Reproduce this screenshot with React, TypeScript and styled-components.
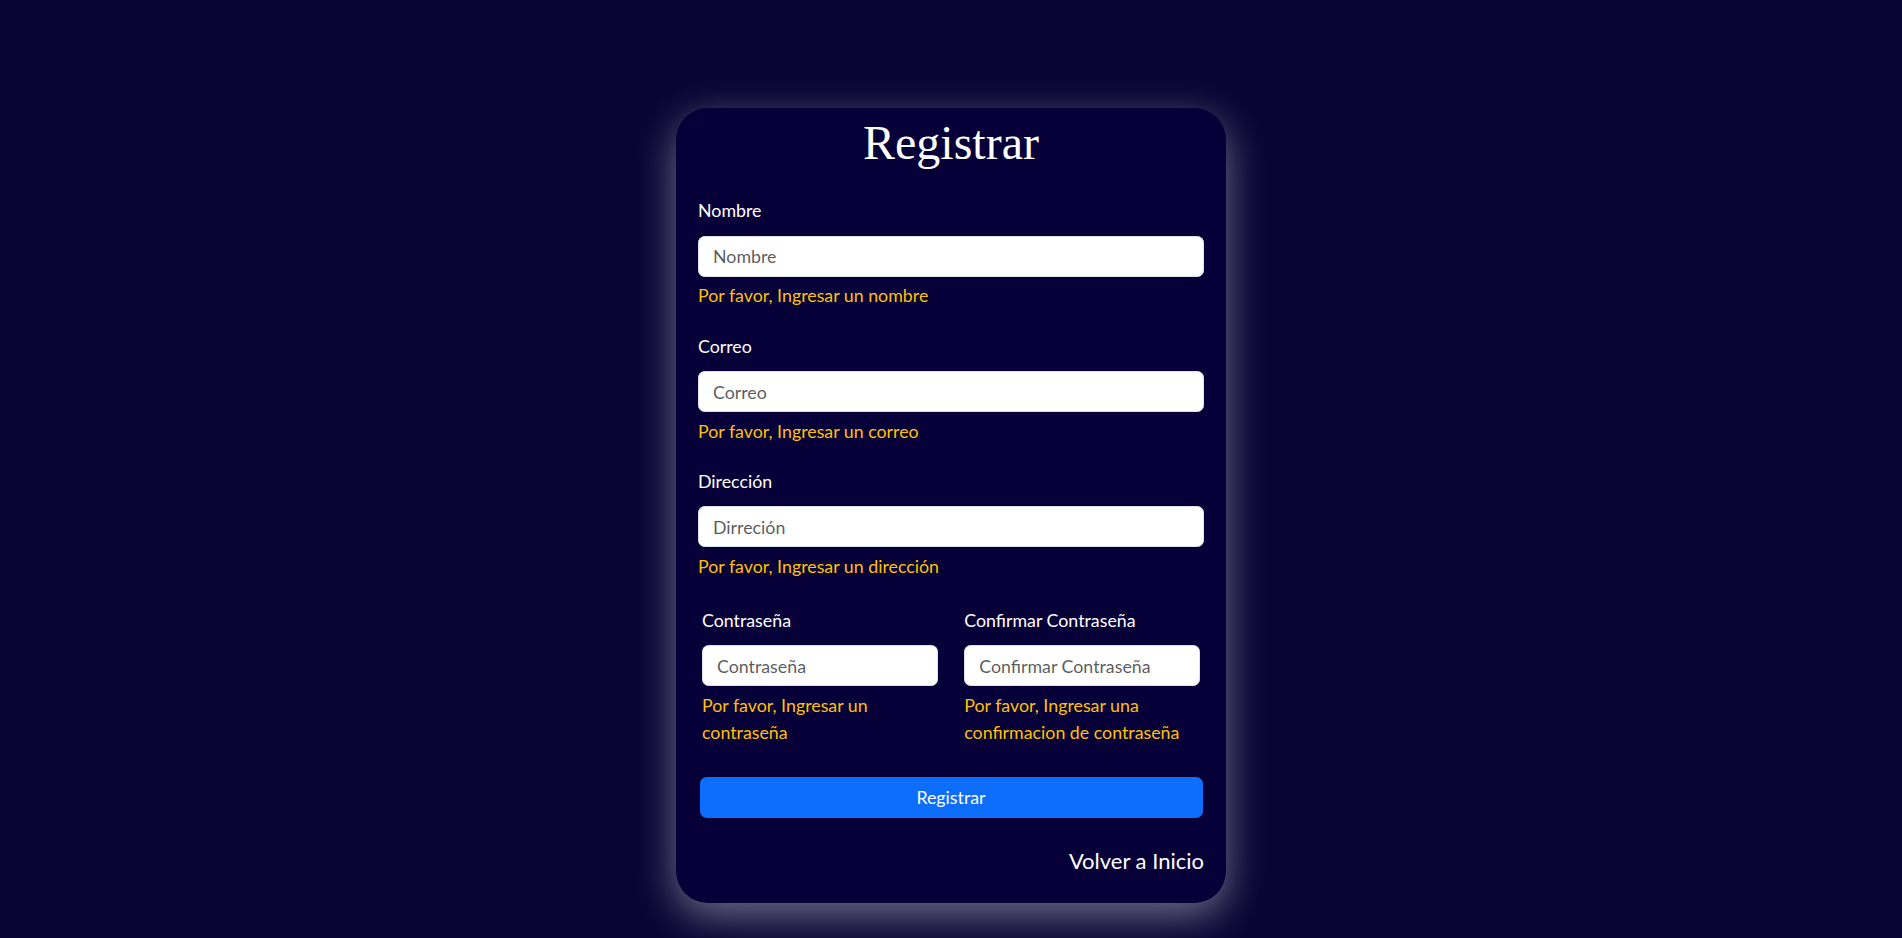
import React from 'react'
import styled, { createGlobalStyle } from 'styled-components'

interface Field {
  id: string
  label: string
  placeholder: string
  error: string
  type?: string
}

const mainFields: Field[] = [
  { id: 'nombre', label: 'Nombre', placeholder: 'Nombre', error: 'Por favor, Ingresar un nombre' },
  { id: 'correo', label: 'Correo', placeholder: 'Correo', error: 'Por favor, Ingresar un correo', type: 'email' },
  { id: 'direccion', label: 'Dirección', placeholder: 'Dirreción', error: 'Por favor, Ingresar un dirección' },
]

const passwordFields: Field[] = [
  { id: 'password', label: 'Contraseña', placeholder: 'Contraseña', error: 'Por favor, Ingresar un contraseña', type: 'password' },
  {
    id: 'confirm',
    label: 'Confirmar Contraseña',
    placeholder: 'Confirmar Contraseña',
    error: 'Por favor, Ingresar una confirmacion de contraseña',
    type: 'password',
  },
]

const GlobalStyle = createGlobalStyle`
  * {
    box-sizing: border-box;
  }
  body {
    margin: 0;
    background: #0a0433;
    font-family: Lato, "Segoe UI", Roboto, sans-serif;
    font-size: 17.8px;
    line-height: 26.4px;
    color: #fff;
  }
`

const FormField = ({ field }: { field: Field }) => (
  <Group>
    <Label htmlFor={field.id}>{field.label}</Label>
    <Input id={field.id} type={field.type ?? 'text'} placeholder={field.placeholder} />
    <Feedback>{field.error}</Feedback>
  </Group>
)

const App = () => {
  return (
    <>
      <GlobalStyle />
      <Page>
        <Card>
          <Title>Registrar</Title>
          <form onSubmit={(e) => e.preventDefault()}>
            {mainFields.map((field) => (
              <FormField key={field.id} field={field} />
            ))}
            <PasswordRow>
              {passwordFields.map((field) => (
                <FormField key={field.id} field={field} />
              ))}
            </PasswordRow>
            <SubmitBtn type='submit'>Registrar</SubmitBtn>
          </form>
          <Footer>
            <BackLink href='#'>Volver a Inicio</BackLink>
          </Footer>
        </Card>
      </Page>
    </>
  )
}

export default App

const Page = styled.div`
  display: flex;
  justify-content: center;
  min-height: 100vh;
  padding-top: 108px;
`

const Card = styled.div`
  width: 550px;
  height: 795px;
  padding: 6px 22px 26px;
  background: #070038;
  border-radius: 32px;
  box-shadow: 0 12px 40px rgba(255, 255, 255, 0.42);
`

const Title = styled.h1`
  margin: 0 0 25.7px;
  font-family: "Liberation Serif", "Times New Roman", serif;
  font-size: 48px;
  font-weight: 400;
  line-height: 1.2;
  text-align: center;
  color: #fff;
`

// 입력 그룹
const Group = styled.div`
  margin-bottom: 24px;
`
const Label = styled.label`
  display: block;
  margin-bottom: 12px;
  color: #fff;
`
const Input = styled.input`
  display: block;
  width: 100%;
  height: 41px;
  padding: 0 14px;
  font: inherit;
  color: #212529;
  background: #fff;
  border: 1px solid #dee2e6;
  border-radius: 6.6px;
  outline: none;

  &::placeholder {
    color: rgba(33, 37, 41, 0.75);
  }
`
const Feedback = styled.div`
  margin-top: 5.5px;
  color: #ffc107;
`

const PasswordRow = styled.div`
  display: grid;
  grid-template-columns: 1fr 1fr;
  column-gap: 26.5px;
  padding: 3.5px 4px 0;

  ${Group} {
    margin-bottom: 30px;
  }
  ${Feedback} {
    line-height: 27.5px;
  }
`

const SubmitBtn = styled.button`
  display: block;
  width: 503px;
  height: 41px;
  margin: 0 auto;
  padding: 0;
  font: inherit;
  color: #fff;
  background: #0d6efd;
  border: 1px solid #0d6efd;
  border-radius: 6.6px;
  cursor: pointer;
`

const Footer = styled.div`
  display: flex;
  justify-content: flex-end;
  margin-top: 26px;
`
const BackLink = styled.a`
  font-size: 22px;
  line-height: 33px;
  color: #fff;
  text-decoration: none;
`
